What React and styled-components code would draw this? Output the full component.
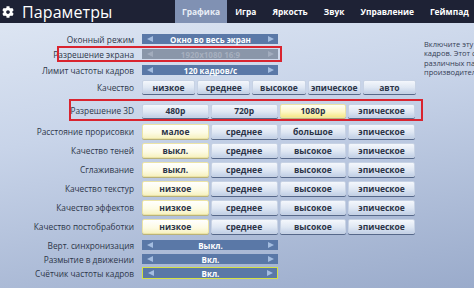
import React from "react";
import styled, { createGlobalStyle } from "styled-components";
import { FaCog } from "react-icons/fa";

const GlobalStyle = createGlobalStyle`
  html, body {
    margin: 0;
    padding: 0;
  }
  body {
    width: 474px;
    height: 288px;
    overflow: hidden;
    font-family: "Open Sans", "DejaVu Sans", sans-serif;
  }
`;

const Screen = styled.div`
  width: 474px;
  height: 288px;
  display: flex;
  flex-direction: column;
  overflow: hidden;
  background: linear-gradient(170deg, #e0e8f4 0%, #c8d4e9 40%, #9aabcb 100%);
`;

const Header = styled.header`
  height: 23px;
  flex-shrink: 0;
  display: flex;
  align-items: stretch;
  overflow: hidden;
  background: #1e2235;
`;

const Brand = styled.div`
  width: 175px;
  flex-shrink: 0;
  display: flex;
  align-items: center;
  gap: 8px;
  padding-left: 2px;
  box-sizing: border-box;
  color: #fff;
  font-size: 16px;
  letter-spacing: 0.1px;
`;

const Tabs = styled.nav`
  display: flex;
  align-items: stretch;
`;

const Tab = styled.div`
  display: flex;
  align-items: center;
  padding: 0 ${(p) => (p.active ? 7 : 8)}px;
  font-size: 8.4px;
  font-weight: 700;
  color: ${(p) => (p.active ? "#e9eef7" : "#fff")};
  background: ${(p) => (p.active ? "#8091b3" : "transparent")};
  white-space: nowrap;
`;

const Body = styled.div`
  flex: 1;
  display: flex;
  min-height: 0;
`;

const Settings = styled.div`
  width: 424px;
  flex-shrink: 0;
  padding-top: 9px;
  display: flex;
  flex-direction: column;
`;

const Row = styled.div`
  position: relative;
  display: grid;
  grid-template-columns: 134px auto;
  column-gap: 8px;
  align-items: center;
  height: ${(p) => p.h}px;
  margin-top: ${(p) => p.mt || 0}px;
  padding-top: ${(p) => p.pt || 0}px;
  box-sizing: border-box;
`;

const Highlight = styled.span`
  position: absolute;
  left: ${(p) => p.left}px;
  width: ${(p) => p.width}px;
  top: ${(p) => p.top}px;
  bottom: ${(p) => p.bottom}px;
  border: 2px solid #d9242f;
  box-sizing: border-box;
  pointer-events: none;
`;

const Label = styled.div`
  text-align: right;
  font-size: 8.3px;
  color: #2d3649;
  white-space: nowrap;
`;

const Selector = styled.div`
  width: 136px;
  height: ${(p) => (p.focused ? 12 : 10)}px;
  box-sizing: border-box;
  display: flex;
  align-items: center;
  justify-content: space-between;
  padding: 0 4px 0 5px;
  background: ${(p) => (p.disabled ? "#8a96a9" : "#5a78a7")};
  border: ${(p) => (p.focused ? "1.5px solid #d4e044" : "none")};
  color: ${(p) => (p.disabled ? "#a6afbe" : "#fff")};
  font-size: 8px;
  font-weight: 700;
`;

const Arrow = styled.span`
  width: 0;
  height: 0;
  border-top: 3.5px solid transparent;
  border-bottom: 3.5px solid transparent;
  ${(p) =>
    p.dir === "left"
      ? `border-right: 6px solid ${p.dim ? "#a2acbd" : "#a4bde0"};`
      : `border-left: 6px solid ${p.dim ? "#a2acbd" : "#a4bde0"};`}
`;

const Group = styled.div`
  display: grid;
  grid-template-columns: repeat(${(p) => p.count}, 1fr);
  gap: 2px;
  width: ${(p) => p.width}px;
`;

const Button = styled.div`
  height: ${(p) => p.h || 15}px;
  box-sizing: border-box;
  display: flex;
  align-items: center;
  justify-content: center;
  border-radius: 2px;
  font-size: 8.5px;
  font-weight: 700;
  color: #2b3447;
  white-space: nowrap;
  background: ${(p) =>
    p.selected === "soft"
      ? "linear-gradient(180deg, #ffffff 0%, #fdfbe4 60%, #f7f2c2 100%)"
      : p.selected === "strong"
      ? "linear-gradient(180deg, #fffef6 0%, #fdf7c8 55%, #f6e98a 100%)"
      : "linear-gradient(180deg, #f4f7fc 0%, #dfe7f3 55%, #c3d1e7 100%)"};
  border: ${(p) => (p.selected ? "1px solid #ece4a6" : "1px solid #c7d2e4")};
  box-shadow: ${(p) =>
    p.selected ? "0 1px 0 #b9b27a" : "0 1px 0 #56688a"};
`;

const Description = styled.div`
  flex: 1;
  overflow: hidden;
  padding-top: 17px;
  font-size: 7.5px;
  line-height: 9.3px;
  color: #354055;
`;

const Line = styled.div`
  white-space: nowrap;
`;

const tabs = ["Графика", "Игра", "Яркость", "Звук", "Управление", "Геймпад"];

const quadRows = [
  { label: "Расстояние прорисовки", options: ["малое", "среднее", "большое", "эпическое"] },
  { label: "Качество теней", options: ["выкл.", "среднее", "высокое", "эпическое"] },
  { label: "Сглаживание", options: ["выкл.", "среднее", "высокое", "эпическое"] },
  { label: "Качество текстур", options: ["низкое", "среднее", "высокое", "эпическое"] },
  { label: "Качество эффектов", options: ["низкое", "среднее", "высокое", "эпическое"] },
  { label: "Качество постобработки", options: ["низкое", "среднее", "высокое", "эпическое"] },
];

const SelectorControl = ({ value, disabled, focused }) => (
  <Selector disabled={disabled} focused={focused}>
    <Arrow dir="left" dim={disabled} />
    <span>{value}</span>
    <Arrow dir="right" dim={disabled} />
  </Selector>
);

const App = () => {
  return (
    <>
      <GlobalStyle />
      <Screen>
        <Header>
          <Brand>
            <FaCog size={12} />
            Параметры
          </Brand>
          <Tabs>
            {tabs.map((t, i) => (
              <Tab key={t} active={i === 0}>
                {t}
              </Tab>
            ))}
          </Tabs>
        </Header>
        <Body>
          <Settings>
            <Row h={14}>
              <Label>Оконный режим</Label>
              <SelectorControl value="Окно во весь экран" />
            </Row>
            <Row h={16}>
              <Highlight left={57} width={225} top={0} bottom={0} />
              <Label>Разрешение экрана</Label>
              <SelectorControl value="1920x1080 16:9" disabled />
            </Row>
            <Row h={16}>
              <Label>Лимит частоты кадров</Label>
              <SelectorControl value="120 кадров/с" />
            </Row>
            <Row h={18}>
              <Label>Качество</Label>
              <Group count={5} width={274}>
                {["низкое", "среднее", "высокое", "эпическое", "авто"].map((o) => (
                  <Button key={o} h={14}>
                    {o}
                  </Button>
                ))}
              </Group>
            </Row>
            <Row h={26} pt={3}>
              <Highlight left={69} width={354} top={3} bottom={1} />
              <Label>Разрешение 3D</Label>
              <Group count={4} width={273}>
                {["480p", "720p", "1080p", "эпическое"].map((o) => (
                  <Button key={o} h={14} selected={o === "1080p" ? "strong" : undefined}>
                    {o}
                  </Button>
                ))}
              </Group>
            </Row>
            {quadRows.map((r) => (
              <Row h={19} key={r.label}>
                <Label>{r.label}</Label>
                <Group count={4} width={273}>
                  {r.options.map((o, i) => (
                    <Button key={o + i} selected={i === 0 ? "soft" : undefined}>
                      {o}
                    </Button>
                  ))}
                </Group>
              </Row>
            ))}
            <Row h={14} mt={2}>
              <Label>Верт. синхронизация</Label>
              <SelectorControl value="Выкл." />
            </Row>
            <Row h={14}>
              <Label>Размытие в движении</Label>
              <SelectorControl value="Вкл." />
            </Row>
            <Row h={14}>
              <Label>Счётчик частоты кадров</Label>
              <SelectorControl value="Вкл." focused />
            </Row>
          </Settings>
          <Description>
            <Line>Включите эту функцию, чтобы видеть частоту</Line>
            <Line>кадров. Этот счётчик полезен при проверке</Line>
            <Line>различных параметров и оценке</Line>
            <Line>производительности.</Line>
          </Description>
        </Body>
      </Screen>
    </>
  );
};

export default App;
